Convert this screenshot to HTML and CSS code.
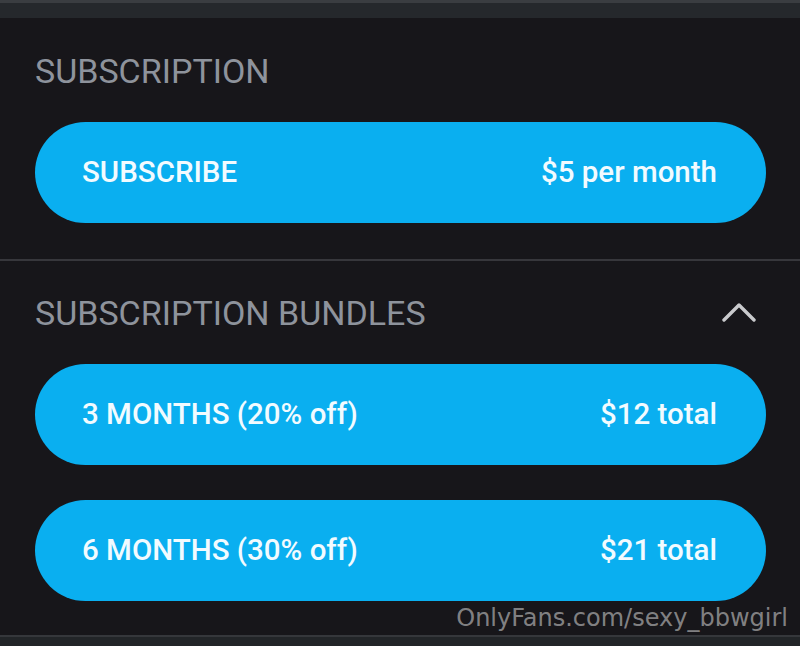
FILE: index.html
```html
<!DOCTYPE html>
<html lang="en">
<head>
<meta charset="UTF-8">
<meta name="viewport" content="width=device-width, initial-scale=1.0">
<title>Subscription</title>
<link rel="stylesheet" href="styles.css">
</head>
<body>

<div id="screen">
    <div class="top_bar"></div>

    <div class="section">
        <h2 class="section_title">SUBSCRIPTION</h2>
        <a class="sub_btn" href="#">
            <span>SUBSCRIBE</span>
            <span>$5 per month</span>
        </a>
    </div>

    <div class="divider"></div>

    <div class="section">
        <div class="section_head">
            <h2 class="section_title">SUBSCRIPTION BUNDLES</h2>
            <svg class="chevron" width="34" height="20" viewBox="0 0 34 20">
                <polyline points="2,17 17,2 32,17" fill="none" stroke="#c9cacd" stroke-width="3.4" stroke-linecap="round" stroke-linejoin="round"/>
            </svg>
        </div>
        <div class="bundle_list">
            <a class="sub_btn" href="#">
                <span>3 MONTHS (20% off)</span>
                <span>$12 total</span>
            </a>
            <a class="sub_btn" href="#">
                <span>6 MONTHS (30% off)</span>
                <span>$21 total</span>
            </a>
        </div>
    </div>

    <div class="bottom_bar"></div>

    <div class="watermark">OnlyFans.com/sexy_bbwgirl</div>
</div>

</body>
</html>
```

FILE: styles.css
```css
/* page */
html, body {
    margin: 0;
    padding: 0;
    background-color: #17161a;
}
#screen {
    position: relative;
    width: 800px;
    height: 646px;
    overflow: hidden;
    display: flex;
    flex-direction: column;
    font-family: Roboto, "Liberation Sans", sans-serif;
}
.top_bar {
    height: 15px;
    border-top: 3px solid #3a3d41;
    background-color: #25282c;
}
.section {
    padding: 33px 34px 36px 35px;
}
.section + .divider + .section {
    padding-top: 32px;
    padding-bottom: 0;
}
.section_head {
    display: flex;
    align-items: center;
    justify-content: space-between;
}
.section_title {
    margin: 0 0 31px 0;
    font-size: 34px;
    line-height: 40px;
    font-weight: 400;
    color: #8e939c;
}
.chevron {
    margin: 0 10px 31px 0;
}
.divider {
    height: 2px;
    background-color: #37373c;
}
.bundle_list {
    display: flex;
    flex-direction: column;
    gap: 35px;
}
.sub_btn {
    display: flex;
    align-items: center;
    justify-content: space-between;
    height: 101px;
    padding: 0 49px 0 47px;
    border-radius: 51px;
    background-color: #0aaff0;
    color: #f2fbff;
    font-size: 29.5px;
    font-weight: 500;
    line-height: 1;
    text-decoration: none;
}
.bottom_bar {
    margin-top: auto;
    height: 9px;
    border-top: 2px solid #35373b;
    background-color: #222528;
}
.watermark {
    position: absolute;
    right: 12px;
    bottom: 14px;
    font-family: "DejaVu Sans", sans-serif;
    font-size: 24px;
    color: rgba(200, 200, 200, 0.62);
}
```
